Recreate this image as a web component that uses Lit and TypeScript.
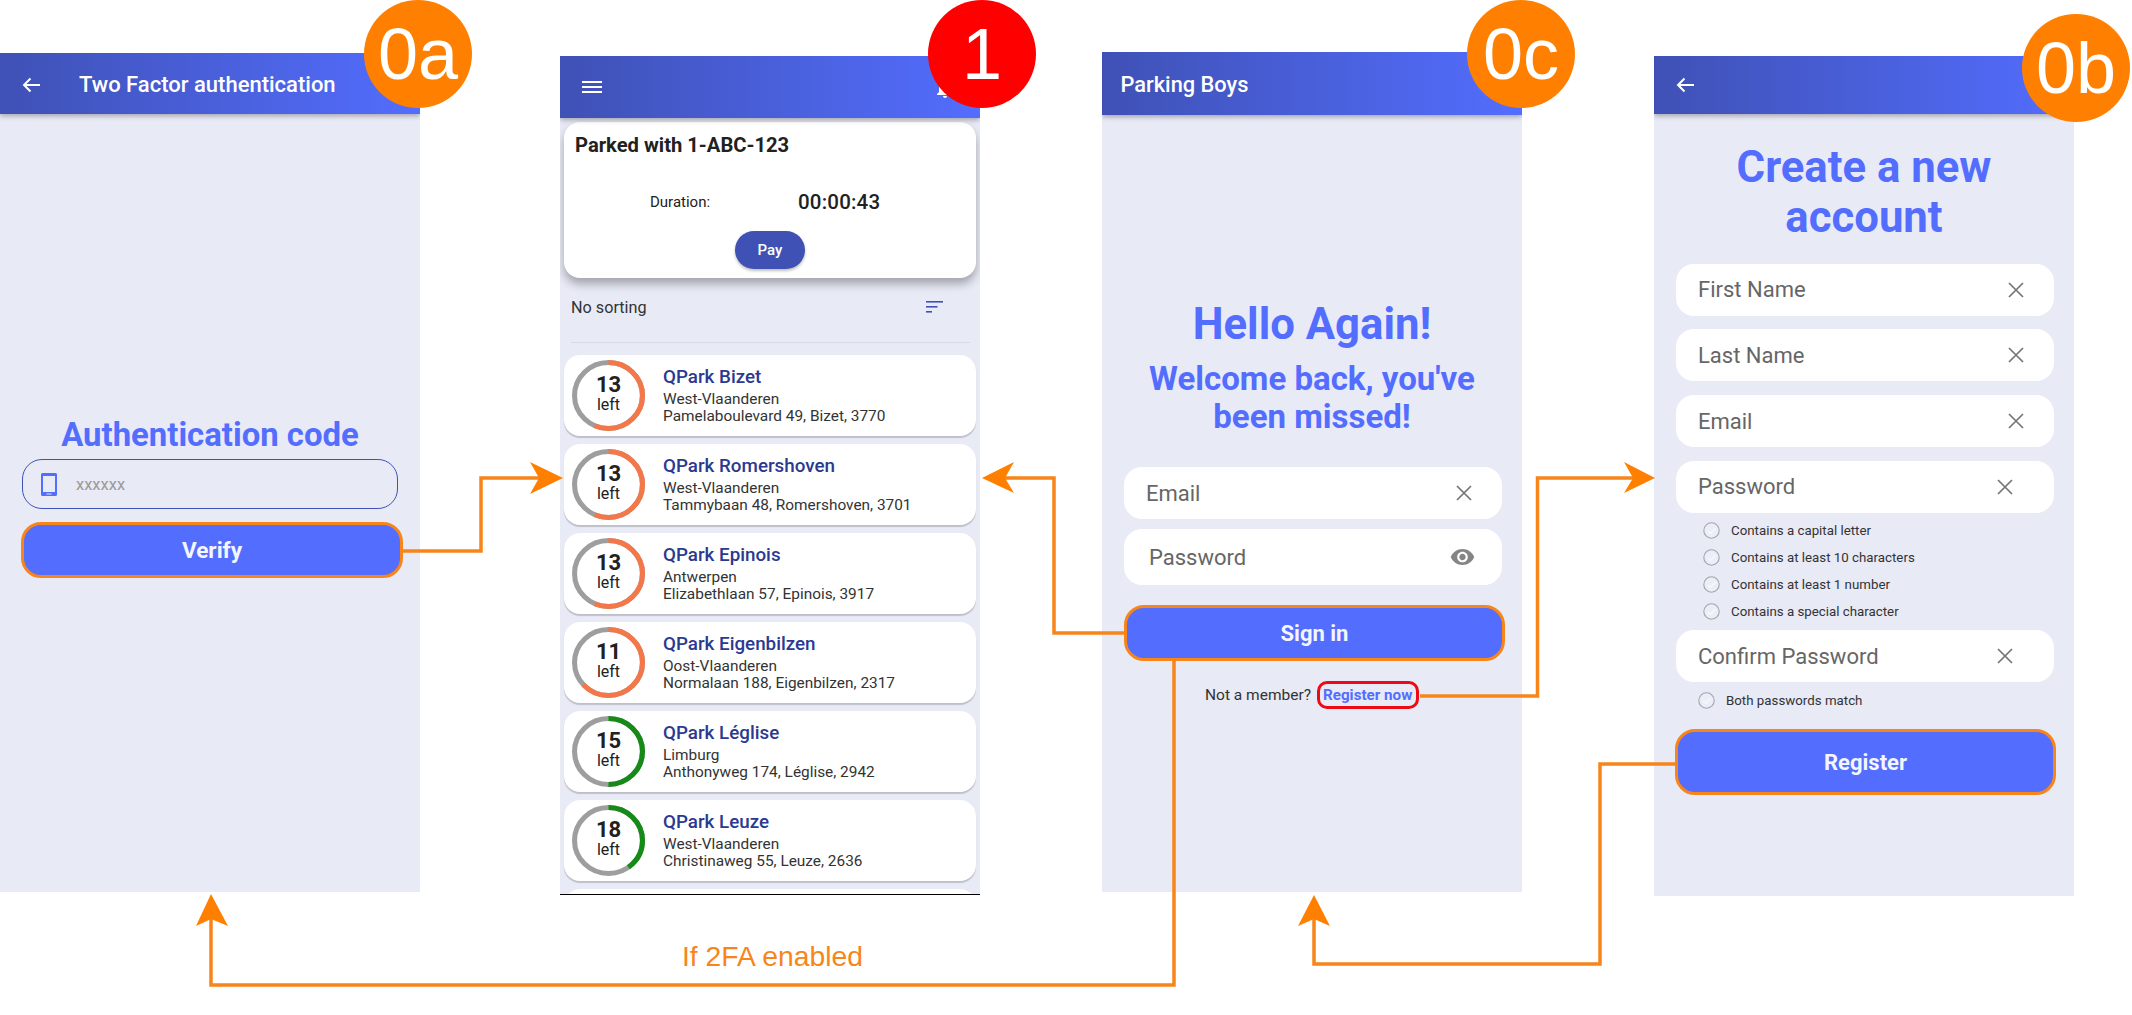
import { LitElement, css, html, svg } from "lit";
import { customElement } from "lit/decorators.js";

type Lot = { name: string; region: string; address: string; left: number };

const CAPACITY = 30;

const LOTS: Lot[] = [
  { name: "QPark Bizet", region: "West-Vlaanderen", address: "Pamelaboulevard 49, Bizet, 3770", left: 13 },
  { name: "QPark Romershoven", region: "West-Vlaanderen", address: "Tammybaan 48, Romershoven, 3701", left: 13 },
  { name: "QPark Epinois", region: "Antwerpen", address: "Elizabethlaan 57, Epinois, 3917", left: 13 },
  { name: "QPark Eigenbilzen", region: "Oost-Vlaanderen", address: "Normalaan 188, Eigenbilzen, 2317", left: 11 },
  { name: "QPark Léglise", region: "Limburg", address: "Anthonyweg 174, Léglise, 2942", left: 15 },
  { name: "QPark Leuze", region: "West-Vlaanderen", address: "Christinaweg 55, Leuze, 2636", left: 18 }
];

const PASSWORD_RULES = [
  "Contains a capital letter",
  "Contains at least 10 characters",
  "Contains at least 1 number",
  "Contains a special character"
];

const backIcon = html`<svg class="back" viewBox="0 0 18 16" fill="none" stroke="#fff" stroke-width="2">
  <path d="M18 8H2M8.5 1.5 2 8l6.5 6.5" />
</svg>`;

const clearIcon = html`<svg class="clear" viewBox="0 0 16 16" fill="none" stroke="#757575" stroke-width="1.7">
  <path d="M1 1l14 14M15 1 1 15" />
</svg>`;

const eyeIcon = html`<svg class="eye" viewBox="1 4.5 22 15" fill="#858585">
  <path d="M12 4.5C7 4.5 2.73 7.61 1 12c1.73 4.39 6 7.5 11 7.5s9.27-3.11 11-7.5c-1.73-4.39-6-7.5-11-7.5zM12 17c-2.76 0-5-2.24-5-5s2.24-5 5-5 5 2.24 5 5-2.24 5-5 5zm0-8c-1.66 0-3 1.34-3 3s1.34 3 3 3 3-1.34 3-3-1.34-3-3-3z" />
</svg>`;

const checkIcon = html`<svg class="check" viewBox="0 0 17 17" fill="none">
  <circle cx="8.5" cy="8.5" r="7.7" fill="#eceef7" stroke="#a3a5ad" stroke-width="1.1" />
  <path d="M5 9l2.5 2.5L12.5 6" stroke="#f7f8fc" stroke-width="1.2" />
</svg>`;

// one elbow connector of the flow diagram, with its arrow head
const connector = (points: string, head: string) => svg`
  <polyline points=${points} fill="none" stroke="#f7851a" stroke-width="3.5" />
  <polygon points=${head} fill="#ff8000" />
`;

@customElement("app-root")
export class AppRoot extends LitElement {
  static styles = css`
    :host {
      display: block;
      position: relative;
      width: 2132px;
      height: 1015px;
      overflow: hidden;
      background: #fff;
      font-family: Roboto, "Noto Sans", sans-serif;
      color: #212121;
    }

    .phone {
      position: absolute;
      width: 420px;
      background: #e8eaf6;
      overflow: hidden;
    }

    .phone-2fa { left: 0; top: 53px; height: 839px; }
    .phone-home { left: 560px; top: 56px; height: 839px; border-bottom: 1.5px solid #000; box-sizing: border-box; }
    .phone-login { left: 1102px; top: 52px; height: 840px; }
    .phone-register { left: 1654px; top: 56px; height: 840px; }

    .bar {
      display: flex;
      align-items: center;
      box-sizing: border-box;
      height: 62px;
      padding-left: 22px;
      background: linear-gradient(90deg, #3f51b5, #536dfe);
      box-shadow: 0 2px 5px rgba(0, 0, 0, 0.3);
      color: #fff;
      font-size: 22px;
      font-weight: 500;
      position: relative;
    }

    .back { width: 18px; height: 16px; margin-right: 39px; flex: none; }
    .code-bar { height: 61px; padding-top: 2px; }
    .login-bar { height: 63px; padding: 2px 0 0 18.5px; font-size: 21.8px; }
    .register-bar { height: 58px; }
    .menu { width: 20px; height: 12px; }
    .bell { position: absolute; left: 373px; top: 20px; width: 24px; height: 24px; fill: #fff; }

    h1, h2 {
      margin: 0;
      color: #536dfe;
      font-weight: 700;
      text-align: center;
    }

    .code-title { margin-top: 302px; font-size: 32.9px; line-height: 38px; }

    .code-input {
      display: flex;
      align-items: center;
      box-sizing: border-box;
      height: 50px;
      margin: 5px 22px 0;
      padding-left: 18px;
      border: 1px solid #3f51b5;
      border-radius: 20px;
      color: #9a9a9a;
      font-size: 16.5px;
    }

    .device { width: 16px; height: 23px; margin-right: 19px; }

    .cta {
      display: flex;
      align-items: center;
      justify-content: center;
      box-sizing: border-box;
      background: #536dfe;
      border: 3.5px solid #f7851a;
      border-radius: 20px;
      color: #f4f6ff;
      font-size: 22px;
      font-weight: 700;
    }

    .verify { width: 382px; height: 56px; margin: 13px 0 0 21px; font-size: 22.6px; }
    .signin { width: 381px; height: 56px; margin: 20px 0 0 22px; }
    .register { width: 381px; height: 66px; margin: 15.5px 0 0 21px; }

    .parked {
      height: 156px;
      margin: 4px 4px 0;
      padding: 11px 11px 0;
      box-sizing: border-box;
      background: #fff;
      border-radius: 16px;
      box-shadow: 0 6px 10px rgba(0, 0, 0, 0.3);
    }

    .parked-title { font-size: 20.2px; font-weight: 700; line-height: 24px; }

    .duration {
      display: flex;
      align-items: center;
      height: 24px;
      margin-top: 33px;
      padding-left: 75px;
      font-size: 15px;
    }

    .duration-label { width: 148px; }
    .duration-value { font-size: 20.5px; font-weight: 500; letter-spacing: 0.2px; }

    .pay {
      display: flex;
      align-items: center;
      justify-content: center;
      width: 70px;
      height: 38px;
      margin: 17px 0 0 160px;
      border-radius: 19px;
      background: #3f51b5;
      box-shadow: 0 2px 3px rgba(0, 0, 0, 0.25);
      color: #fff;
      font-size: 15px;
      font-weight: 500;
    }

    .sort {
      display: flex;
      align-items: center;
      justify-content: space-between;
      height: 36px;
      margin-top: 11px;
      padding: 0 37px 0 11px;
      color: #333;
      font-size: 16.2px;
    }

    .sort-icon { width: 17px; height: 12px; }
    .divider { height: 1px; margin: 17px 10px 0 11px; background: #d8dae6; }
    .lots { display: flex; flex-direction: column; gap: 8px; margin: 12px 4px 0; }

    .lot {
      display: flex;
      align-items: center;
      gap: 18px;
      flex: none;
      height: 81px;
      padding-left: 8px;
      background: #fff;
      border-radius: 16px;
      box-shadow: 0 1.5px 1px rgba(0, 0, 0, 0.18);
    }

    .ring { display: grid; width: 73px; height: 71px; flex: none; }
    .ring > * { grid-area: 1 / 1; }
    .ring svg { width: 73px; height: 71px; }

    .ring-text {
      display: flex;
      flex-direction: column;
      align-items: center;
      justify-content: center;
      padding-bottom: 3px;
      font-size: 16px;
      line-height: 18px;
    }

    .ring-count { font-size: 22px; font-weight: 700; line-height: 22px; }
    .lot-info { font-size: 15.4px; line-height: 17px; color: #333; }
    .lot-name { margin-bottom: 2.5px; color: #2b3990; font-size: 18.8px; font-weight: 500; line-height: 22px; }

    .hello { margin-top: 184px; font-size: 43.7px; line-height: 50px; }
    .welcome { margin-top: 11px; font-size: 33px; line-height: 38px; }
    .account { margin-top: 28px; font-size: 43.7px; line-height: 50px; }

    .field {
      display: flex;
      align-items: center;
      justify-content: space-between;
      box-sizing: border-box;
      width: 378px;
      height: 52px;
      margin-left: 22px;
      padding: 0 30px 0 22px;
      background: #fff;
      border-radius: 18px;
      color: #666;
      font-size: 22px;
    }

    .clear { width: 16px; height: 16px; flex: none; }
    .eye { width: 25px; height: 16px; flex: none; margin-right: -3px; }
    .first-field { margin-top: 31px; }
    .password-field { height: 56px; margin-top: 10px; padding-left: 25px; }
    .stack { display: flex; flex-direction: column; gap: 13.8px; margin-top: 21.5px; }
    .wide-x { padding-right: 41px; }
    .stacked-field { margin-top: 5.5px; }

    .member {
      display: flex;
      align-items: center;
      gap: 6px;
      margin-top: 20px;
      padding-left: 103px;
      color: #333;
      font-size: 15.5px;
    }

    .link {
      box-sizing: border-box;
      height: 28px;
      padding: 0 4px 0 3px;
      border: 3px solid #ee0a14;
      border-radius: 10px;
      color: #536dfe;
      font-size: 15.2px;
      font-weight: 700;
      line-height: 22px;
    }

    .rules { margin: 4.5px 0 0 49px; }
    .rule {
      display: flex;
      align-items: center;
      gap: 11px;
      height: 26.8px;
      color: #333;
      font-size: 13.3px;
    }

    .check { width: 17px; height: 17px; flex: none; }
    .match { margin: 5px 0 0 44px; }

    .badge {
      position: absolute;
      display: flex;
      align-items: center;
      justify-content: center;
      width: 108px;
      height: 108px;
      border-radius: 50%;
      background: #ff8000;
      color: #fff;
      font-family: "Liberation Sans", Arial, sans-serif;
      font-size: 72px;
      line-height: 1;
    }

    .badge-a { left: 364px; top: 0; }
    .badge-1 { left: 928px; top: 0; background: #ff0000; }
    .badge-c { left: 1467px; top: 0; }
    .badge-b { left: 2022px; top: 14px; }

    .flow { position: absolute; left: 0; top: 0; width: 2132px; height: 1015px; }

    .flow-label {
      position: absolute;
      left: 682px;
      top: 940px;
      color: #f7851a;
      font-family: "Liberation Sans", Arial, sans-serif;
      font-size: 28.3px;
      line-height: 32px;
    }
  `;

  private renderLot(lot: Lot) {
    const taken = ((CAPACITY - lot.left) / CAPACITY) * 100;
    const arcColour = lot.left < 15 ? "#f4774a" : "#158a16";
    return html`
      <div class="lot">
        <div class="ring">
          <svg viewBox="0 0 72 72" preserveAspectRatio="none" fill="none" stroke-width="5">
            <circle cx="36" cy="36" r="33.5" stroke="#9e9e9e" />
            <circle
              cx="36"
              cy="36"
              r="33.5"
              stroke=${arcColour}
              pathLength="100"
              stroke-dasharray="${taken} 100"
              transform="rotate(-90 36 36)"
            />
          </svg>
          <div class="ring-text"><span class="ring-count">${lot.left}</span><span>left</span></div>
        </div>
        <div class="lot-info">
          <div class="lot-name">${lot.name}</div>
          <div>${lot.region}</div>
          <div>${lot.address}</div>
        </div>
      </div>
    `;
  }

  private renderTwoFactor() {
    return html`
      <section class="phone phone-2fa">
        <div class="bar code-bar">${backIcon}Two Factor authentication</div>
        <h2 class="code-title">Authentication code</h2>
        <div class="code-input">
          <svg class="device" viewBox="0 0 16 23">
            <path fill="#536dfe" fill-rule="evenodd" d="M1.5 0h13A1.5 1.5 0 0 1 16 1.5v20a1.5 1.5 0 0 1-1.5 1.5h-13A1.5 1.5 0 0 1 0 21.500v-20A1.500 1.500 0 0 1 1.500 0zM2 3v16h12V3zM5.500 20.500v1h5v-1z" />
          </svg>
          xxxxxx
        </div>
        <div class="cta verify">Verify</div>
      </section>
    `;
  }

  private renderHome() {
    return html`
      <section class="phone phone-home">
        <div class="bar">
          <svg class="menu" viewBox="0 0 20 12" fill="#fff">
            <rect width="20" height="2" /><rect y="5" width="20" height="2" /><rect y="10" width="20" height="2" />
          </svg>
          <svg class="bell" viewBox="0 0 24 24">
            <path d="M12 22c1.100 0 2-.9 2-2h-4c0 1.100.89 2 2 2zm6-6v-5c0-3.070-1.640-5.640-4.500-6.320V4c0-.83-.67-1.500-1.500-1.500s-1.500.67-1.500 1.500v.68C7.630 5.360 6 7.920 6 11v5l-2 2v1h16v-1l-2-2z" />
          </svg>
        </div>
        <div class="parked">
          <div class="parked-title">Parked with 1-ABC-123</div>
          <div class="duration">
            <span class="duration-label">Duration:</span>
            <span class="duration-value">00:00:43</span>
          </div>
          <div class="pay">Pay</div>
        </div>
        <div class="sort">
          No sorting
          <svg class="sort-icon" viewBox="0 0 17 12" fill="#3f51b5">
            <rect width="17" height="1.600" /><rect y="5" width="11.500" height="1.600" /><rect y="10" width="6" height="1.600" />
          </svg>
        </div>
        <div class="divider"></div>
        <div class="lots">
          ${LOTS.map((lot) => this.renderLot(lot))}
          <div class="lot"></div>
        </div>
      </section>
    `;
  }

  private renderLogin() {
    return html`
      <section class="phone phone-login">
        <div class="bar login-bar">Parking Boys</div>
        <h1 class="hello">Hello Again!</h1>
        <h2 class="welcome">Welcome back, you've<br />been missed!</h2>
        <div class="field first-field">Email ${clearIcon}</div>
        <div class="field password-field">Password ${eyeIcon}</div>
        <div class="cta signin">Sign in</div>
        <div class="member">
          <span>Not a member?</span>
          <span class="link">Register now</span>
        </div>
      </section>
    `;
  }

  private renderRegister() {
    return html`
      <section class="phone phone-register">
        <div class="bar register-bar">${backIcon}</div>
        <h1 class="account">Create a new<br />account</h1>
        <div class="stack">
          <div class="field">First Name ${clearIcon}</div>
          <div class="field">Last Name ${clearIcon}</div>
          <div class="field">Email ${clearIcon}</div>
          <div class="field wide-x">Password ${clearIcon}</div>
        </div>
        <div class="rules">
          ${PASSWORD_RULES.map((rule) => html`<div class="rule">${checkIcon}${rule}</div>`)}
        </div>
        <div class="field wide-x stacked-field">Confirm Password ${clearIcon}</div>
        <div class="rule match">${checkIcon}Both passwords match</div>
        <div class="cta register">Register</div>
      </section>
    `;
  }

  protected render() {
    return html`
      ${this.renderTwoFactor()} ${this.renderHome()} ${this.renderLogin()} ${this.renderRegister()}
      <svg class="flow" viewBox="0 0 2132 1015">
        ${connector("402,551 481,551 481,478 540,478", "563,478 530,462 539,478 530,494")}
        ${connector("1124,633 1054,633 1054,478 1000,478", "982,478 1014,462 1005,478 1014,493")}
        ${connector("1174,661 1174,985 211,985 211,915", "211,894 228,926 211,919 196,926")}
        ${connector("1420,696 1537.500,696 1537.500,478 1635,478", "1655,478 1624,462 1633,478 1624,493")}
        ${connector("1675,764 1600,764 1600,964 1314,964 1314,915", "1314,895 1330,926 1314,919 1298,926")}
      </svg>
      <div class="flow-label">If 2FA enabled</div>
      <div class="badge badge-a">0a</div>
      <div class="badge badge-1">1</div>
      <div class="badge badge-c">0c</div>
      <div class="badge badge-b">0b</div>
    `;
  }
}
